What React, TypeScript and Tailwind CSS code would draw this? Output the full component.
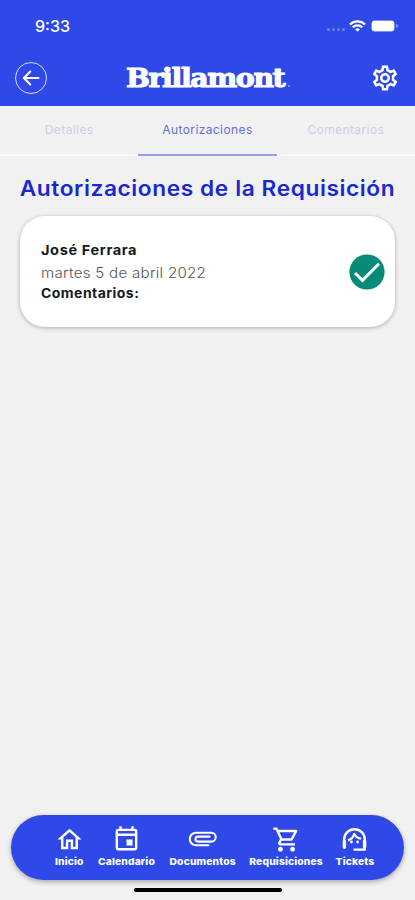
import clsx from "clsx";
import type { IconType } from "react-icons";
import {
  MdOutlineHome,
  MdOutlineInsertInvitation,
  MdOutlineSettings,
  MdOutlineShoppingCart,
} from "react-icons/md";

// Wide, horizontal paperclip drawn as one continuous wire
const PaperclipIcon = ({ className }: { className?: string }) => (
  <svg viewBox="0 0 29 29" className={className} fill="none" stroke="currentColor" strokeWidth="2.1" strokeLinecap="round">
    <path d="M20.5 20.2H8a6.2 6.2 0 0 1 0-12.4h15.3a4.4 4.4 0 0 1 0 8.8H10a2.5 2.5 0 0 1 0-5h11.5" />
  </svg>
);

const AgentIcon = ({ className }: { className?: string }) => (
  <svg viewBox="0 0 29 29" className={className} fill="none" stroke="currentColor" strokeWidth="2.4" strokeLinejoin="round">
    <path d="M4.2 21.8V14.5a10.3 10.3 0 0 1 20.6 0v10.1H13.5" />
    <path d="M4.4 16.3v6M24.6 16.3v6" strokeWidth="3.4" strokeLinecap="round" />
    <path d="M8 15.3c3.3-1 5.4-3.3 6.2-6.3 1.7 2.9 3.9 4.4 7 4.7" strokeWidth="2.3" />
    <circle cx="11.4" cy="17" r="1.4" fill="currentColor" stroke="none" />
    <circle cx="17.6" cy="17" r="1.4" fill="currentColor" stroke="none" />
  </svg>
);

type NavItem = { label: string; icon: IconType | typeof PaperclipIcon; width: string };

const navItems: NavItem[] = [
  { label: "Inicio", icon: MdOutlineHome, width: "w-[30px]" },
  { label: "Calendario", icon: MdOutlineInsertInvitation, width: "w-[58px]" },
  { label: "Documentos", icon: PaperclipIcon, width: "w-[68px]" },
  { label: "Requisiciones", icon: MdOutlineShoppingCart, width: "w-[73px]" },
  { label: "Tickets", icon: AgentIcon, width: "w-[38px]" },
];

const tabs = ["Detalles", "Autorizaciones", "Comentarios"];

const StatusBar = () => (
  <div className="flex h-[50px] items-center justify-between pl-[35px] pr-[17px] pt-0.5">
    <span className="text-[16px] font-medium leading-5">9:33</span>
    <div className="flex items-center">
      <div className="mr-1 mt-[7px] flex gap-[2px]">
        {[0, 1, 2, 3].map((dot) => (
          <span key={dot} className="size-[3px] rounded-full bg-white/30" />
        ))}
      </div>
      <svg viewBox="0 0 17 12" className="mr-[5px] h-3 w-[17px]" fill="none" stroke="currentColor" strokeWidth="2.3">
        <path d="M1 4.5a10.6 10.6 0 0 1 15 0M3.7 7.3a6.8 6.8 0 0 1 9.6 0" />
        <path d="M8.5 11.7 6.2 9.4a3.3 3.3 0 0 1 4.6 0Z" fill="currentColor" stroke="none" />
      </svg>
      <div className="h-[12px] w-[24px] rounded-[4px] border border-white/40">
        <div className="h-full rounded-[2px] bg-white" />
      </div>
      <span className="ml-px h-1 w-[2px] rounded-r-full bg-white/40" />
    </div>
  </div>
);

const Header = () => (
  <header className="h-[106px] bg-[#2f49e8] text-white">
    <StatusBar />
    <div className="flex h-[55px] items-center justify-between pl-[15px] pr-[15px]">
      <button aria-label="Volver" className="flex size-8 items-center justify-center rounded-full border border-white/80">
        <svg viewBox="0 0 18 18" className="size-[18px]" fill="none" stroke="currentColor" strokeWidth="2" strokeLinecap="round" strokeLinejoin="round">
          <path d="M16.5 9H2M8.3 2.5 1.8 9l6.5 6.5" />
        </svg>
      </button>
      <div className="flex w-[163px] items-baseline whitespace-nowrap font-['DejaVu_Serif',serif] font-bold">
        <span className="-ml-px origin-left scale-x-[1.07] text-[26.5px] leading-8 tracking-[-1.3px] [-webkit-text-stroke:1.1px_white]">
          Brillamont
        </span>
        <span className="ml-auto size-[2px] shrink-0 rounded-full bg-white/50" />
      </div>
      <button aria-label="Ajustes">
        <MdOutlineSettings className="size-[30px]" />
      </button>
    </div>
  </header>
);

const Tabs = () => (
  <nav className="grid h-[50px] grid-cols-3 text-[12px] tracking-[0.4px]">
    {tabs.map((tab) => (
      <button
        key={tab}
        className={clsx(
          "border-b-2",
          tab === "Autorizaciones"
            ? "border-[#999de5] text-[#6870dd]"
            : "border-[#fafafa] text-[#cfcdf0]",
        )}
      >
        {tab}
      </button>
    ))}
  </nav>
);

const AuthorizationCard = () => (
  <article className="mx-5 mt-[13px] flex h-[111px] items-center justify-between rounded-[25px] bg-white pl-[21px] pr-[10px] shadow-[0_1px_4px_rgba(0,0,0,0.28)]">
    <div className="origin-left scale-x-[1.08] whitespace-nowrap pt-0.5 text-[14px] leading-[21.5px] text-[#151923]">
      <h2 className="text-[13.5px] font-bold tracking-[0.55px]">José Ferrara</h2>
      <p className="font-light tracking-[0.25px] text-[#555]">martes 5 de abril 2022</p>
      <p className="text-[13px] font-bold tracking-[0.4px]">Comentarios:</p>
    </div>
    <svg viewBox="0 0 36 36" className="size-9">
      <circle cx="18" cy="18" r="17.6" fill="#078b79" />
      <path d="m6 19 7.5 7.3L30 9.8" fill="none" stroke="white" strokeWidth="3" />
    </svg>
  </article>
);

const BottomBar = () => (
  <footer className="mt-auto">
    <nav className="mx-[11px] flex h-[65px] justify-center gap-[13px] rounded-full bg-[#2f49e8] pl-[13px] pt-[10px] text-white shadow-[0_2px_5px_rgba(0,0,0,0.3)]">
      {navItems.map(({ label, icon: Icon, width }) => (
        <button key={label} className={clsx("flex flex-col items-center", width)}>
          <Icon className="size-[29px]" />
          <span className="scale-x-[1.08] whitespace-nowrap text-[9.5px] font-extrabold leading-[15px] tracking-[0.15px]">
            {label}
          </span>
        </button>
      ))}
    </nav>
    <div className="mx-auto mb-2 mt-2 h-1 w-[148px] rounded-full bg-black" />
  </footer>
);

export default function App() {
  return (
    <div className="flex h-screen w-full flex-col overflow-hidden bg-[#f1f1f1] font-['Inter','Liberation_Sans',sans-serif]">
      <Header />
      <Tabs />
      <main>
        <h1 className="mt-[19px] scale-x-[1.08] whitespace-nowrap text-center text-[21px] font-semibold leading-7 tracking-[0.55px] text-[#1729cf]">
          Autorizaciones de la Requisición
        </h1>
        <AuthorizationCard />
      </main>
      <BottomBar />
    </div>
  );
}
